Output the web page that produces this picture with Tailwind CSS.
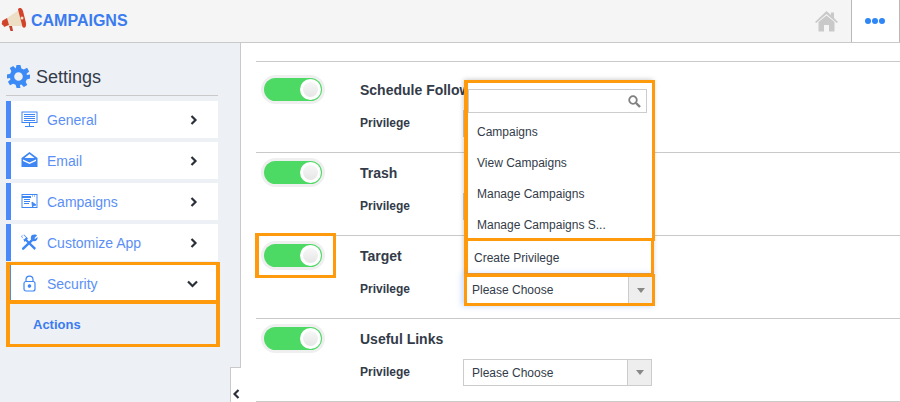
<!DOCTYPE html>
<html>
  <head>
    <meta charset="UTF-8" />
    <script src="https://cdn.jsdelivr.net/npm/@tailwindcss/browser@4"></script>
    <title>Campaigns | Settings</title>
  </head>
  <body class="w-[900px] h-[402px] overflow-hidden bg-white font-['Liberation_Sans',sans-serif] text-[#333b49]">
    <!-- top bar -->
    <header class="flex h-[43px] items-stretch justify-between border-b border-[#c9c9c9] bg-[#f5f5f5]">
      <div class="flex items-center">
        <svg class="mt-[-2px] h-[24px] w-[28px]" viewBox="0 8 28 24">
          <path d="M7 18 L19 10 L24 26 L9 26 Z" fill="#ecdfc6" />
          <path d="M2 21 L7 18 L9 25 L4 27 Z" fill="#d2432b" />
          <circle cx="3.800" cy="23.500" r="2" fill="#d2432b" />
          <path d="M9 26 L12 26 L13 31 L10.500 31 Z" fill="#c8402a" />
          <path d="M18 9 C20 7 22 8 23 11 L26 23 C26.500 27 24.500 29 22.500 27 C21.500 22 19 14 18 9 Z" fill="#d2432b" />
          <circle cx="22" cy="18" r="1.500" fill="#f2e6d0" />
        </svg>
        <span class="ml-[3px] text-[16px] font-bold text-[#3b7bf0]">CAMPAIGNS</span>
      </div>
      <div class="flex">
        <div class="flex w-[72px] items-center justify-center pl-[23px]">
          <svg class="h-[21px] w-[23px]" viewBox="0 0 23 21" fill="#c9c9c9">
            <path d="M11.500 0 L16 4 V1.500 H19 V7 L23 11 L21.800 12 L11.500 3 L1.200 12 L0 11 Z" />
            <path d="M3.500 11 L11.500 4.500 L19.500 11 V20.500 H14 V14 H9 V20.500 H3.500 Z" />
          </svg>
        </div>
        <div class="flex w-[49px] items-center justify-center gap-[1px] border-x border-[#b9b9b9] bg-white pr-[1px]">
          <span class="h-[6px] w-[6px] rounded-full bg-[#2f86f6]"></span>
          <span class="h-[6px] w-[6px] rounded-full bg-[#2f86f6]"></span>
          <span class="h-[6px] w-[6px] rounded-full bg-[#2f86f6]"></span>
        </div>
      </div>
    </header>

    <div class="flex h-[359px]">
      <!-- sidebar -->
      <aside class="relative w-[241px] shrink-0 border-r border-[#c9c9c9] bg-[#edf0f5] pl-[6px]">
        <div class="flex h-[53px] w-[212px] items-center gap-[6px] border-b border-[#c9c9c9] pt-[16px]">
          <svg class="ml-[1px] mt-[-1px] h-[23px] w-[23px]" viewBox="0 0 24 24" fill="#3b8af5">
            <path fill-rule="evenodd" d="M10 0 H14 L15 3.600 L17.600 4.700 L20.900 2.900 L21.100 3.100 L23.100 6.700 L20.400 9 L20.800 10.500 L24 10 V14 L20.600 15 L19.500 17.600 L21.100 20.900 L17.600 23 L15 20.400 L13.500 20.800 L14 24 H10 L9 20.600 L6.400 19.500 L3.100 21.100 L1 17.600 L3.600 15 L3.200 13.500 L0 14 V10 L3.400 9 L4.500 6.400 L2.900 3.100 L6.400 1 L9 3.600 Z M12 7.500 A4.500 4.500 0 1 0 12 16.500 A4.500 4.500 0 1 0 12 7.500 Z" />
          </svg>
          <span class="text-[18px]">Settings</span>
        </div>

        <nav class="mt-[5px] flex w-[212px] flex-col gap-[4px] text-[14px] text-[#5b8ff5]">
          <a class="flex h-[37px] items-center border-l-[5px] border-[#4a8af8] bg-white pl-[10px] pr-[20px]">
            <svg class="h-[17px] w-[17px]" viewBox="0 0 17 17" fill="none" stroke="#3f86f5">
              <rect x="1" y="1" width="15" height="10.500" />
              <path d="M3 3.500 H14 M3 5.500 H14 M3 7.500 H14 M3 9.500 H14 M8.500 12 V15 M4 15.500 H13" />
            </svg>
            <span class="ml-[9px] mt-[2px] flex-1">General</span>
            <svg class="h-[10px] w-[8px]" viewBox="0 0 8 10" fill="none" stroke="#2b2f3a" stroke-width="2.200"><path d="M1.500 1 L5.500 5 L1.500 9" /></svg>
          </a>
          <a class="flex h-[37px] items-center border-l-[5px] border-[#4a8af8] bg-white pl-[10px] pr-[20px]">
            <svg class="h-[17px] w-[17px]" viewBox="0 0 17 17" fill="#3f86f5">
              <path d="M8.500 0 L16.500 6 V15 H0.500 V6 Z M8.500 2 L3.500 6 H13.500 Z M2 7.500 V9 L8.500 12 L15 9 V7.500 L8.500 10.500 Z" fill-rule="evenodd" />
            </svg>
            <span class="ml-[9px] mt-[2px] flex-1">Email</span>
            <svg class="h-[10px] w-[8px]" viewBox="0 0 8 10" fill="none" stroke="#2b2f3a" stroke-width="2.200"><path d="M1.500 1 L5.500 5 L1.500 9" /></svg>
          </a>
          <a class="flex h-[37px] items-center border-l-[5px] border-[#4a8af8] bg-white pl-[10px] pr-[20px]">
            <svg class="h-[17px] w-[17px]" viewBox="0 0 17 17" fill="none" stroke="#3f86f5">
              <rect x="1" y="1.500" width="15" height="13" />
              <path d="M1 4 H10" stroke-width="2" />
              <path d="M11 3 H12 M13 3 H14 M3 6.500 H9 M3 8.500 H9 M3 10.500 H8" />
              <path d="M11 9 L15 12 L12.500 12.500 L11.500 14 Z" fill="#3f86f5" />
            </svg>
            <span class="ml-[9px] mt-[2px] flex-1">Campaigns</span>
            <svg class="h-[10px] w-[8px]" viewBox="0 0 8 10" fill="none" stroke="#2b2f3a" stroke-width="2.200"><path d="M1.500 1 L5.500 5 L1.500 9" /></svg>
          </a>
          <a class="flex h-[37px] items-center border-l-[5px] border-[#4a8af8] bg-white pl-[10px] pr-[20px]">
            <svg class="h-[17px] w-[17px]" viewBox="0 0 17 17" fill="#3f86f5">
              <path d="M1 2 L3 0.500 L7 4.500 L6 5.500 L15 14 L13.500 16 L4.500 7 L3.500 8 Z M0.500 3 L3 5.500 L5 3.500 L2.500 1 C0.500 1 0 2 0.500 3 Z" />
              <path d="M11 1 C13 0 15.500 0.500 16 1.500 L13.500 4 L14 5 L16.500 3 C17 6 14.500 8 12 7 L3 15.500 C2 16.500 0.500 15.500 1 14 L10 5.500 C9.500 3.500 10 2 11 1 Z" />
            </svg>
            <span class="ml-[9px] mt-[2px] flex-1">Customize App</span>
            <svg class="h-[10px] w-[8px]" viewBox="0 0 8 10" fill="none" stroke="#2b2f3a" stroke-width="2.200"><path d="M1.500 1 L5.500 5 L1.500 9" /></svg>
          </a>
          <a class="flex h-[37px] items-center border-l-[5px] border-[#4a8af8] bg-white pl-[10px] pr-[20px]">
            <svg class="h-[17px] w-[17px]" viewBox="0 0 17 17" fill="none" stroke="#3f86f5" stroke-width="1.200">
              <rect x="3" y="6.500" width="11" height="9.500" rx="2" />
              <path d="M5 6.500 V4.500 C5 0 12 0 12 4.500 V6.500" />
              <circle cx="8.500" cy="11" r="1.200" fill="#3f86f5" />
            </svg>
            <span class="ml-[9px] mt-[2px] flex-1">Security</span>
            <svg class="h-[8px] w-[11px]" viewBox="0 0 11 8" fill="none" stroke="#2b2f3a" stroke-width="2.200"><path d="M1 1.500 L5.500 6 L10 1.500" /></svg>
          </a>
          <div class="-mt-[4px] flex h-[44px] items-center pl-[27px] pt-[2px] text-[13px] font-bold text-[#3b7bf0]">Actions</div>
        </nav>

        <!-- highlight frames on the sidebar -->
        <div class="absolute left-[6px] top-[219px] h-[41px] w-[214px] border-x-4 border-y-[3px] border-[#ff9a0d]"></div>
        <div class="absolute left-[6px] top-[258px] h-[46px] w-[214px] border-x-4 border-y-[3px] border-[#ff9a0d]"></div>

        <div class="absolute right-[-1px] top-[324px] flex h-[35px] w-[11px] items-center justify-center border-l border-t border-[#c9c9c9] bg-white pl-[1px] pt-[17px]">
          <svg class="h-[10px] w-[7px]" viewBox="0 0 7 10" fill="none" stroke="#2b2f3a" stroke-width="2.200"><path d="M5.500 1 L1.500 5 L5.500 9" /></svg>
        </div>
      </aside>

      <!-- content -->
      <main class="relative flex-1 pl-[15px] pt-[18px]">
        <section class="relative flex h-[92px] border-y border-[#c9c9c9]">
          <div class="w-[104px] pl-[8px] pt-[16px]">
            <div class="flex h-[23px] w-[58px] items-center justify-end rounded-full bg-[#4cd964] pr-[1px] ring-[3px] ring-[#efefef]"><span class="h-[21px] w-[21px] rounded-full border-[3px] border-white bg-linear-to-b from-[#f7f7f7] to-[#e6e6e6]"></span></div>
          </div>
          <div class="pt-[18px]">
            <div class="text-[14px] font-bold leading-[20px]">Schedule Follow</div>
            <div class="mt-[14px] text-[12px] font-bold leading-[18px]">Privilege</div>
          </div>
          <div class="absolute left-[207px] top-[48px] flex h-[27px] w-[189px] border border-[#cccccc] bg-white"></div>
        </section>
        <section class="relative flex h-[83px] border-b border-[#c9c9c9]">
          <div class="w-[104px] pl-[8px] pt-[8px]">
            <div class="flex h-[23px] w-[58px] items-center justify-end rounded-full bg-[#4cd964] pr-[1px] ring-[3px] ring-[#efefef]"><span class="h-[21px] w-[21px] rounded-full border-[3px] border-white bg-linear-to-b from-[#f7f7f7] to-[#e6e6e6]"></span></div>
          </div>
          <div class="pt-[10px]">
            <div class="text-[14px] font-bold leading-[20px]">Trash</div>
            <div class="mt-[14px] text-[12px] font-bold leading-[18px]">Privilege</div>
          </div>
          <div class="absolute left-[207px] top-[40px] flex h-[27px] w-[189px] border border-[#cccccc] bg-white"></div>
        </section>
        <section class="flex h-[83px] border-b border-[#c9c9c9]">
          <div class="w-[104px] pl-[8px] pt-[8px]">
            <div class="flex h-[23px] w-[58px] items-center justify-end rounded-full bg-[#4cd964] pr-[1px] ring-[3px] ring-[#efefef]"><span class="h-[21px] w-[21px] rounded-full border-[3px] border-white bg-linear-to-b from-[#f7f7f7] to-[#e6e6e6]"></span></div>
          </div>
          <div class="pt-[10px]">
            <div class="text-[14px] font-bold leading-[20px]">Target</div>
            <div class="mt-[14px] text-[12px] font-bold leading-[18px]">Privilege</div>
          </div>
        </section>
        <section class="relative flex h-[83px] border-b border-[#c9c9c9]">
          <div class="w-[104px] pl-[8px] pt-[8px]">
            <div class="flex h-[23px] w-[58px] items-center justify-end rounded-full bg-[#4cd964] pr-[1px] ring-[3px] ring-[#efefef]"><span class="h-[21px] w-[21px] rounded-full border-[3px] border-white bg-linear-to-b from-[#f7f7f7] to-[#e6e6e6]"></span></div>
          </div>
          <div class="pt-[10px]">
            <div class="text-[14px] font-bold leading-[20px]">Useful Links</div>
            <div class="mt-[14px] text-[12px] font-bold leading-[18px]">Privilege</div>
          </div>
          <div class="absolute left-[207px] top-[40px] flex h-[27px] w-[189px] border border-[#cccccc] bg-white text-[12px]">
            <span class="flex-1 pl-[8px] leading-[27px]">Please Choose</span>
            <span class="flex w-[24px] items-center justify-center border-l border-[#cccccc] bg-[#eeeeee]"><span class="h-0 w-0 border-x-[4px] border-t-[5px] border-x-transparent border-t-[#888888]"></span></span>
          </div>
        </section>

        <!-- open dropdown -->
        <div class="absolute left-[223px] top-[37px] w-[191px] text-[12px]">
          <div class="absolute left-0 right-[2px] top-0 bottom-0 bg-white shadow-[0_0_5px_rgba(0,0,0,0.25)]"></div>
          <div class="absolute inset-x-0 top-0 h-[161px] border-y-[3px] border-r-[3px] border-l-4 border-[#ff9a0d]"></div>
          <div class="relative pl-[4px] pr-[8px] pt-[9px]">
            <div class="flex h-[24px] items-center justify-end border border-[#cccccc] pr-[5px]">
              <svg class="h-[13px] w-[13px]" viewBox="0 0 13 13" fill="none" stroke="#808080" stroke-width="1.800"><circle cx="5" cy="5" r="3.800" /><path d="M8 8 L12 12" stroke-width="2.400" /></svg>
            </div>
          </div>
          <ul class="relative pl-[13px] pt-[4px] leading-[31px]">
            <li>Campaigns</li>
            <li>View Campaigns</li>
            <li>Manage Campaigns</li>
            <li>Manage Campaigns S...</li>
          </ul>
          <div class="relative -mt-[3px] mr-[1px] h-[38px] border-y-[3px] border-r-[3px] border-l-4 border-[#ff9a0d] bg-white pl-[6px] leading-[34px]">Create Privilege</div>
        </div>
        <div class="absolute left-[223px] top-[231px] flex h-[32px] w-[191px] border-[3px] border-[#ff9a0d] bg-white text-[12px] shadow-[-2px_0_6px_rgba(80,140,240,0.35)]">
          <span class="flex-1 pl-[5px] leading-[26px]">Please Choose</span>
          <span class="flex w-[24px] items-center justify-center border-l border-[#cccccc] bg-[#eeeeee]"><span class="h-0 w-0 border-x-[4px] border-t-[5px] border-x-transparent border-t-[#888888]"></span></span>
        </div>
        <!-- highlight on the Target toggle -->
        <div class="absolute left-[14px] top-[190px] h-[45px] w-[81px] border-y-[3px] border-r-[3px] border-l-4 border-[#ff9a0d]"></div>
      </main>
    </div>
  </body>
</html>
